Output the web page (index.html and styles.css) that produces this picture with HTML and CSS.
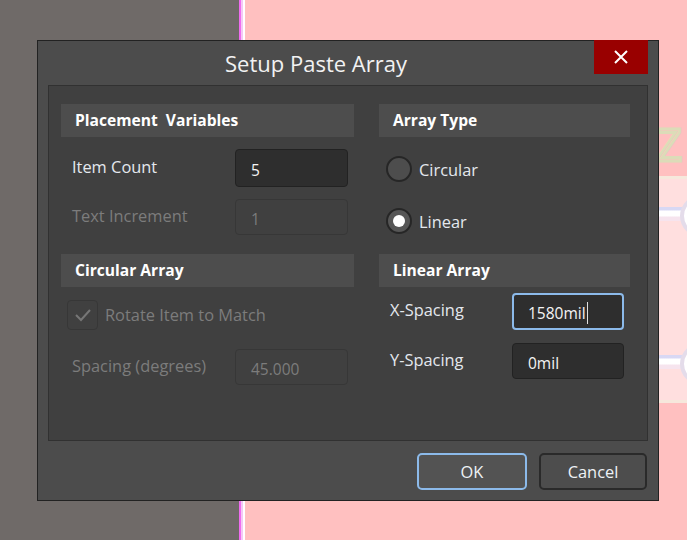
FILE: index.html
```html
<!DOCTYPE html>
<html>
<head>
<meta charset="utf-8">
<link rel="stylesheet" href="styles.css">
</head>
<body>
<div class="desktop">
  <div class="bg-grey"></div>
  <div class="bg-magenta"></div>
  <div class="bg-lilac"></div>
  <div class="bg-white"></div>
  <div class="bg-pink">
    <div class="pcb-band"></div>
    <div class="pcb-z">Z</div>
    <div class="pcb-track t1"></div>
    <div class="pcb-pad p1"></div>
    <div class="pcb-track t2"></div>
    <div class="pcb-pad p2"></div>
  </div>

  <div class="dialog">
    <div class="titlebar">
      <div class="title">Setup Paste Array</div>
      <div class="close">
        <svg width="14" height="14" viewBox="0 0 14 14"><path d="M1 1 L13 13 M13 1 L1 13" stroke="#fff" stroke-width="2" fill="none"/></svg>
      </div>
    </div>
    <div class="panel">
      <div class="col col-left">
        <div class="header">Placement&nbsp; Variables</div>
        <div class="row row-a">
          <span class="label">Item Count</span>
          <div class="input active">5</div>
        </div>
        <div class="row row-b">
          <span class="label disabled">Text Increment</span>
          <div class="input off">1</div>
        </div>
        <div class="header header-2">Circular Array</div>
        <div class="check-row">
          <div class="checkbox">
            <svg width="18" height="14" viewBox="0 0 18 14"><path d="M2 7 L7 12 L16 2" stroke="#767676" stroke-width="2" fill="none"/></svg>
          </div>
          <span class="label disabled">Rotate Item to Match</span>
        </div>
        <div class="row row-c">
          <span class="label disabled">Spacing (degrees)</span>
          <div class="input off">45.000</div>
        </div>
      </div>
      <div class="col col-right">
        <div class="header">Array Type</div>
        <div class="radio-row r1">
          <div class="radio"></div>
          <span class="label">Circular</span>
        </div>
        <div class="radio-row r2">
          <div class="radio on"><div class="dot"></div></div>
          <span class="label">Linear</span>
        </div>
        <div class="header header-2">Linear Array</div>
        <div class="row row-x">
          <span class="label">X-Spacing</span>
          <div class="input focus">1580mil<span class="caret"></span></div>
        </div>
        <div class="row row-y">
          <span class="label">Y-Spacing</span>
          <div class="input active">0mil</div>
        </div>
      </div>
    </div>
    <div class="buttons">
      <div class="btn ok">OK</div>
      <div class="btn cancel">Cancel</div>
    </div>
  </div>
</div>
</body>
</html>
```
FILE: styles.css
```css
html, body {
  margin: 0;
  padding: 0;
}
body {
  width: 687px;
  height: 540px;
  overflow: hidden;
  font-family: "Open Sans", "Noto Sans", sans-serif;
}
.desktop {
  position: relative;
  display: flex;
  width: 687px;
  height: 540px;
}
.bg-grey { width: 239px; background: #6f6a68; }
.bg-magenta { width: 2px; background: #ef6cf0; }
.bg-lilac { width: 2px; background: #f3c8f4; }
.bg-white { width: 2px; background: #ffffff; }
.bg-pink {
  position: relative;
  flex: 1;
  background: #ffc0c0;
  overflow: hidden;
}
.pcb-band {
  position: absolute;
  left: 380px;
  right: 0;
  top: 176px;
  height: 221px;
  background: #ffdfdf;
  border-top: 3px solid #f6e8dc;
  border-bottom: 3px solid #f6e8dc;
}
.pcb-z {
  position: absolute;
  left: 410px;
  top: 118px;
  font-family: "Liberation Sans", sans-serif;
  font-size: 46px;
  color: transparent;
  -webkit-text-stroke: 3px #dcdcb8;
  transform: scaleX(0.9);
}
.pcb-track {
  position: absolute;
  left: 380px;
  right: 0;
  height: 14px;
  background: linear-gradient(#d8d8f4 0, #d8d8f4 3px, #ffffff 4px, #ffffff 9px, #f6e4ee 10px);
}
.t1 { top: 207px; }
.t2 { top: 355px; }
.pcb-pad {
  position: absolute;
  left: 435px;
  width: 34px;
  height: 34px;
  border-radius: 50%;
  background: #ffffff;
  border: 4px solid #e4dcea;
}
.p1 { top: 195px; }
.p2 { top: 343px; }

.dialog {
  position: absolute;
  left: 37px;
  top: 40px;
  width: 600px;
  height: 459px;
  padding: 0 10px;
  background: #4c4c4c;
  border: 1px solid #222222;
  display: flex;
  flex-direction: column;
}
.titlebar {
  display: flex;
  height: 44px;
  align-items: flex-start;
}
.title {
  flex: 1;
  text-align: center;
  color: #f2f2f2;
  font-size: 22px;
  line-height: 44px;
  padding-right: 10px;
}
.close {
  width: 54px;
  height: 34px;
  margin-top: -1px;
  background: #990000;
  display: flex;
  align-items: center;
  justify-content: center;
}
.panel {
  background: #404040;
  border: 1px solid #313131;
  display: flex;
  padding: 18px 17px 0 12px;
  gap: 25px;
  box-sizing: border-box;
  height: 356px;
}
.col { display: flex; flex-direction: column; }
.col-left { width: 293px; }
.col-right { width: 251px; }
.header {
  height: 33px;
  background: #4d4d4d;
  color: #ffffff;
  font-weight: 700;
  font-size: 15.6px;
  line-height: 33px;
  padding-left: 14px;
}
.label {
  color: #e4e8ee;
  font-size: 16.4px;
}
.label.disabled { color: #7c7c7c; }
.row {
  display: flex;
  align-items: center;
}
.col-left .row .label { width: 163px; padding-left: 11px; padding-bottom: 3px; }
.col-left .input { width: 113px; }
.col-right .row .label { width: 122px; padding-left: 11px; }
.col-right .input { width: 112px; }
.input {
  box-sizing: border-box;
  border-radius: 4px;
  font-size: 15.5px;
  padding-left: 15px;
  display: flex;
  align-items: center;
}
.input.active {
  background: #2e2e2e;
  border: 1px solid #222222;
  color: #f4f4f4;
}
.input.off {
  background: #404040;
  border: 1px solid #373737;
  color: #7c7c7c;
}
.input.focus {
  background: #2e2e2e;
  border: 2px solid #8cbaea;
  color: #f4f4f4;
  padding-left: 14px;
}
.caret {
  display: inline-block;
  width: 1px;
  height: 22px;
  background: #e0e0e0;
  margin-left: 1px;
}
.row-a { margin-top: 12px; }
.row-a .input { height: 38px; padding-top: 3px; }
.row-b { margin-top: 12px; }
.row-b .input { height: 36px; padding-top: 3px; }
.header-2 { margin-top: 19px; }
.col-right .header-2 { margin-top: 14px; }
.check-row {
  display: flex;
  align-items: center;
  margin-top: 13px;
  padding-left: 6px;
}
.check-row .label { padding-bottom: 1px; }
.checkbox {
  box-sizing: border-box;
  width: 31px;
  height: 30px;
  border: 1px solid #373737;
  border-radius: 4px;
  display: flex;
  align-items: center;
  justify-content: center;
  margin-right: 7px;
}
.row-c { margin-top: 19px; }
.row-c .input { height: 36px; padding-top: 3px; }

.radio-row {
  display: flex;
  align-items: center;
  height: 38px;
  padding-left: 7px;
}
.r1 { margin-top: 13px; }
.r2 { margin-top: 14px; }
.radio {
  box-sizing: border-box;
  width: 26px;
  height: 26px;
  border-radius: 50%;
  background: #4d4d4d;
  border: 2px solid #262626;
  margin-right: 7px;
  display: flex;
  align-items: center;
  justify-content: center;
}
.radio.on { background: #565656; }
.dot {
  width: 12px;
  height: 12px;
  border-radius: 50%;
  background: #ffffff;
}
.row-x { margin-top: 6px; }
.row-x .label { padding-bottom: 4px; }
.row-x .input { height: 37px; padding-top: 3px; }
.row-y { margin-top: 13px; }
.row-y .label { padding-bottom: 4px; }
.row-y .input { height: 36px; padding-top: 3px; }

.buttons {
  display: flex;
  justify-content: flex-end;
  gap: 12px;
  margin-top: 12px;
  padding-right: 1px;
}
.btn {
  box-sizing: border-box;
  height: 37px;
  border-radius: 5px;
  display: flex;
  align-items: center;
  justify-content: center;
  color: #eef2f6;
  font-size: 16.4px;
}
.btn.ok {
  width: 110px;
  background: #535353;
  border: 2px solid #8cbaea;
}
.btn.cancel {
  width: 108px;
  background: #4d4d4d;
  border: 2px solid #2a2a2a;
}
```
